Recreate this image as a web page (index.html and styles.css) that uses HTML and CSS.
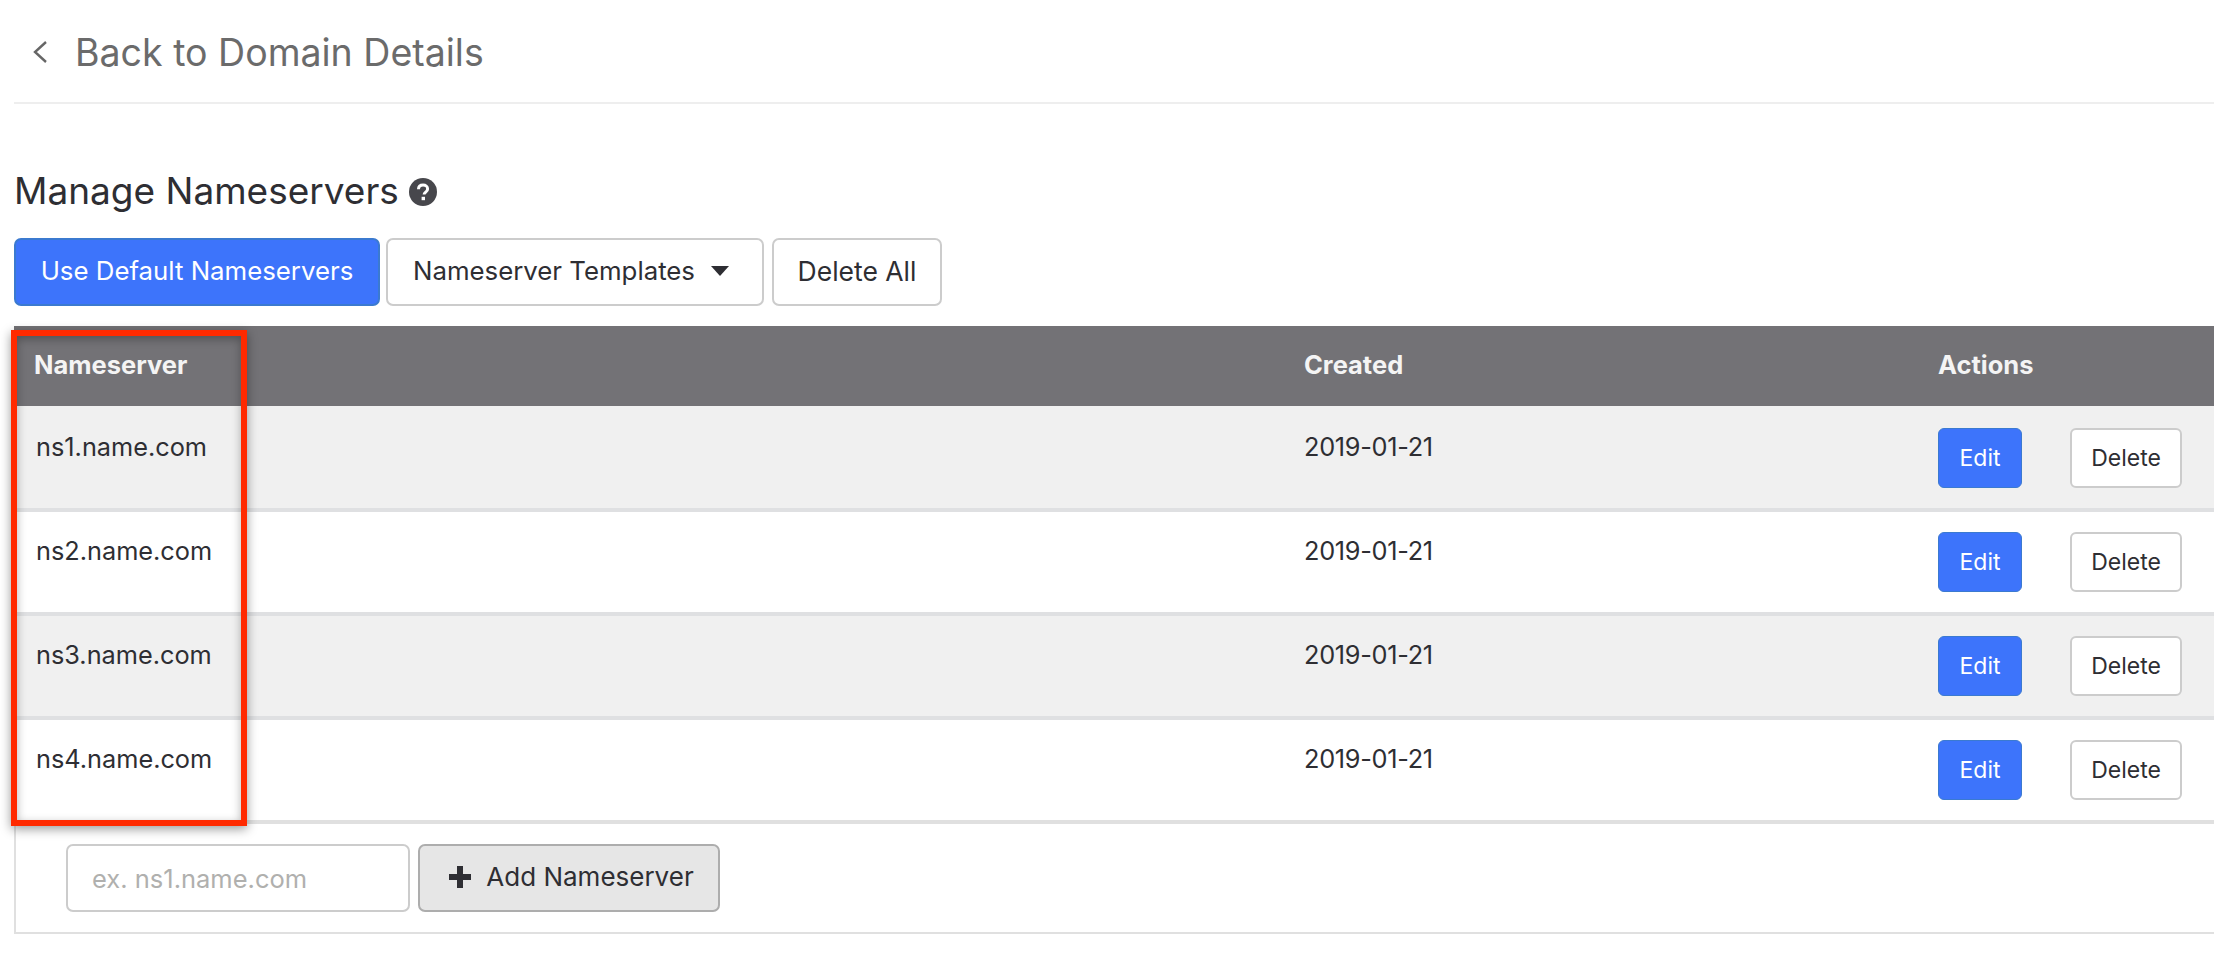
FILE: index.html
```html
<!DOCTYPE html>
<html lang="en">
<head>
<meta charset="utf-8">
<title>Manage Nameservers</title>
<link rel="stylesheet" href="styles.css">
</head>
<body>
<main class="page">
  <nav class="backbar">
    <svg class="chevron" width="18" height="22" viewBox="0 0 18 22"><path d="M15 1 L4 11 L15 21" fill="none" stroke="#666" stroke-width="2.4"/></svg>
    <a class="backlink">Back to Domain Details</a>
  </nav>
  <h1 class="title">Manage Nameservers
    <svg class="help" width="28" height="28" viewBox="0 0 28 28"><circle cx="14" cy="14" r="14" fill="#47474c"/><path d="M9.5 11.2c0-2.7 2-4.2 4.6-4.2 2.500 0 4.500 1.500 4.500 3.900 0 3.300-3.500 3.200-3.500 5.700" fill="none" stroke="#fff" stroke-width="3"/><rect x="12.600" y="18.800" width="3.400" height="3.400" fill="#fff"/></svg>
  </h1>
  <div class="toolbar">
    <button class="btn primary">Use Default Nameservers</button>
    <button class="btn outline templates">Nameserver Templates<svg class="caret" width="18" height="10" viewBox="0 0 18 10"><path d="M0 0H18L9 10Z" fill="#2e2e33"/></svg></button>
    <button class="btn outline deleteall">Delete All</button>
  </div>
  <table class="ns-table">
    <colgroup><col class="col-name"><col class="col-created"><col></colgroup>
    <thead>
      <tr><th>Nameserver</th><th>Created</th><th>Actions</th></tr>
    </thead>
    <tbody>
      <tr><td>ns1.name.com</td><td class="date">2019-01-21</td><td class="actions"><button class="small edit">Edit</button><button class="small del">Delete</button></td></tr>
      <tr><td>ns2.name.com</td><td class="date">2019-01-21</td><td class="actions"><button class="small edit">Edit</button><button class="small del">Delete</button></td></tr>
      <tr><td>ns3.name.com</td><td class="date">2019-01-21</td><td class="actions"><button class="small edit">Edit</button><button class="small del">Delete</button></td></tr>
      <tr><td>ns4.name.com</td><td class="date">2019-01-21</td><td class="actions"><button class="small edit">Edit</button><button class="small del">Delete</button></td></tr>
    </tbody>
  </table>
  <form class="addrow">
    <input class="ns-input" type="text" placeholder="ex. ns1.name.com">
    <button class="btn add" type="button"><svg class="plus" width="22" height="22" viewBox="0 0 22 22"><path d="M8 0H14V8H22V14H14V22H8V14H0V8H8Z" fill="#2e2e33"/></svg>Add Nameserver</button>
  </form>
  <div class="highlight"></div>
</main>
</body>
</html>
```
FILE: styles.css
```css
* { box-sizing: border-box; }
html, body { margin: 0; padding: 0; background: #fff; overflow: hidden; }
body { font-family: "Inter", "Liberation Sans", sans-serif; color: #2e2e33; }
.page { position: relative; padding-left: 14px; height: 964px; }
.backbar { display: flex; align-items: center; height: 104px; padding: 2px 0 0 17px; border-bottom: 2px solid #eee; }
.chevron { margin-right: 26px; }
.backlink { font-size: 37.5px; color: #6b6b6b; }
.title { margin: 0; padding-top: 65px; height: 134px; font-size: 37px; font-weight: 400; line-height: 44px; display: flex; align-items: flex-start; }
.help { margin: 9px 0 0 10px; }
.toolbar { display: flex; gap: 6px; height: 88px; }
.btn { height: 68px; font: inherit; font-size: 25.8px; border-radius: 7px; padding: 0 0 3px; color: #2e2e33; display: inline-flex; align-items: center; justify-content: center; }
.primary { width: 366px; background: #3d74fb; color: #fff; border: 2px solid #3b7ad0; }
.outline { background: #fff; border: 2px solid #ccc; }
.templates { width: 378px; justify-content: flex-start; padding-left: 25px; }
.caret { margin-left: 16px; }
.deleteall { width: 170px; margin-left: 2px; font-size: 26.5px; }
.ns-table { width: 100%; table-layout: fixed; border-collapse: separate; border-spacing: 0; font-size: 25.3px; }
.col-name { width: 1276px; }
.col-created { width: 634px; }
.ns-table th { height: 82px; background: #737276; color: #f4f4f4; font-size: 25.5px; font-weight: 700; text-align: left; padding: 0 0 4px 14px; border-bottom: 2px solid #f0f0f0; }
.ns-table th:first-child { padding-left: 20px; }
.ns-table td { height: 104px; padding: 21px 0 0 14px; vertical-align: top; border-bottom: 4px solid #dfe0e2; line-height: 36px; }
.ns-table td:first-child { padding-left: 22px; }
.ns-table td.date { letter-spacing: -0.3px; }
.ns-table tbody tr:nth-child(odd) { background: #f0f0f0; }
.ns-table tbody tr:last-child td { border-bottom-color: #e0e0e0; }
.ns-table td.actions { padding: 20px 0 0 14px; letter-spacing: 0; }
.small { height: 60px; font: inherit; font-size: 23px; border-radius: 6px; padding: 0; }
.edit { width: 84px; background: #3d74fb; color: #fff; border: 1px solid #3b7ad0; }
.del { width: 112px; margin-left: 48px; background: #fff; color: #2e2e33; border: 2px solid #ccc; }
.addrow { display: flex; gap: 8px; padding: 20px 0 0 50px; height: 110px; border-left: 2px solid #e0e0e0; border-bottom: 2px solid #e0e0e0; }
.ns-input { width: 344px; height: 68px; font: inherit; font-size: 25.5px; padding: 0 24px; border: 2px solid #ccc; border-radius: 7px; color: #2e2e33; }
.ns-input::placeholder { color: #b0b0ae; opacity: 1; }
.add { width: 302px; background: #e6e6e6; border: 2px solid #adadad; font-size: 26px; padding-left: 5px; }
.plus { margin-right: 15px; }
.highlight { position: absolute; left: 11px; top: 330px; width: 236px; height: 496px; border: 6px solid #ff2a00; box-shadow: 0 3px 10px rgba(0,0,0,.4), inset 0 3px 10px rgba(0,0,0,.3); pointer-events: none; }
```
